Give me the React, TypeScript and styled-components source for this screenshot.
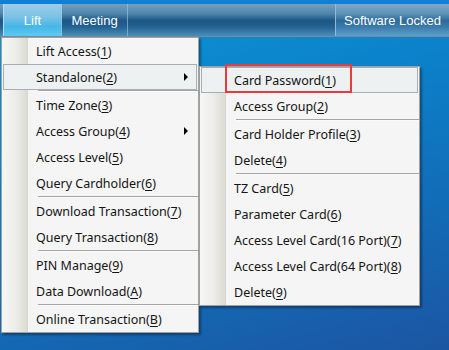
import React from "react";
import styled, { createGlobalStyle } from "styled-components";

const GlobalStyle = createGlobalStyle`
  html, body { margin: 0; padding: 0; overflow: hidden; }
  * { box-sizing: border-box; }
`;

const Screen = styled.div`
  width: 449px;
  height: 350px;
  display: flex;
  flex-direction: column;
  background: linear-gradient(165deg, #0e96d7 0%, #0b82cb 35%, #1467b2 75%, #1c55a2 100%);
  font-family: "Noto Sans", "Segoe UI", sans-serif;
`;

const TopStripe = styled.div`
  height: 4px;
  background: #0f80d6;
`;

const TabBar = styled.div`
  height: 33px;
  display: flex;
  background: linear-gradient(180deg, #74a0bf 0%, #4f86ae 30%, #1b5787 52%, #21608f 70%, #4a8dbb 100%);
  border-bottom: 1px solid #7d8a94;
  padding-left: 3px;
`;

const Tab = styled.div<{ $active?: boolean }>`
  width: ${(p) => (p.$active ? 59 : 66)}px;
  display: flex;
  align-items: center;
  justify-content: center;
  color: #fff;
  font-family: "Liberation Sans", Arial, sans-serif;
  font-size: 13px;
  border-right: 1px solid rgba(160, 200, 225, 0.6);
  background: ${(p) =>
    p.$active
      ? "linear-gradient(180deg, #9dcde8 0%, #7cc2e6 40%, #45b6e8 70%, #5ccaf2 100%)"
      : "transparent"};
  ${(p) => (p.$active ? "border-left: 1px solid #b8dcef;" : "")}
`;

const Spacer = styled.div`
  flex: 1;
`;

const LockTab = styled.div`
  width: 114px;
  display: flex;
  align-items: center;
  justify-content: center;
  color: #fff;
  font-family: "Liberation Sans", Arial, sans-serif;
  font-size: 13px;
  border-left: 1px solid #95b9d0;
  background: linear-gradient(180deg, #80a9c6 0%, #5e92b8 30%, #2c6a9a 52%, #3a7aa9 70%, #5d9ecb 100%);
`;

const Body = styled.div`
  flex: 1;
  padding-left: 1px;
`;

const MenuWrap = styled.div`
  position: relative;
  width: 198px;
`;

const Menu = styled.div<{ $width: number }>`
  width: ${(p) => p.$width}px;
  border: 1px solid #a0a0a0;
  background: linear-gradient(90deg, #f6f6f4 0px, #ecece8 14px, #dcdcd4 25px, #d2d2ca 26px, #f5f5f5 26px);
  box-shadow: 2px 2px 2px rgba(0, 0, 0, 0.35);
  display: flex;
  flex-direction: column;
  position: relative;
`;

const SubMenuPos = styled.div`
  position: absolute;
  left: 198px;
  top: 29px;
`;

const Item = styled.div<{ $hover?: boolean }>`
  height: 26px;
  margin: 0 1px;
  display: flex;
  align-items: center;
  padding-left: 32px;
  padding-right: 5px;
  font-size: 12.5px;
  color: #141414;
  border: 1px solid ${(p) => (p.$hover ? "#a7afb5" : "transparent")};
  background: ${(p) => (p.$hover ? "#edf1f1" : "transparent")};
  white-space: nowrap;
`;

const Label = styled.span`
  flex: 1;
`;

const Key = styled.span`
  text-decoration: underline;
  text-underline-offset: 2px;
`;

const Arrow = styled.span`
  width: 0;
  height: 0;
  border-left: 4px solid #000;
  border-top: 4px solid transparent;
  border-bottom: 4px solid transparent;
  margin-right: 3px;
`;

const Sep = styled.div`
  height: 2px;
  margin-left: 36px;
  border-top: 1px solid #a4a4a4;
  background: #fafafa;
`;

const Highlight = styled.div`
  position: absolute;
  left: 25px;
  top: -3px;
  width: 127px;
  height: 29px;
  border: 2px solid #ea3a3c;
  pointer-events: none;
`;

type Entry = { label: string; key: string; sub?: boolean; hover?: boolean } | "sep";

const mainItems: Entry[] = [
  { label: "Lift Access", key: "1" },
  { label: "Standalone", key: "2", sub: true, hover: true },
  "sep",
  { label: "Time Zone", key: "3" },
  { label: "Access Group", key: "4", sub: true },
  { label: "Access Level", key: "5" },
  { label: "Query Cardholder", key: "6" },
  "sep",
  { label: "Download Transaction", key: "7" },
  { label: "Query Transaction", key: "8" },
  "sep",
  { label: "PIN Manage", key: "9" },
  { label: "Data Download", key: "A" },
  "sep",
  { label: "Online Transaction", key: "B" },
];

const subItems: Entry[] = [
  { label: "Card Password", key: "1", hover: true },
  { label: "Access Group", key: "2" },
  "sep",
  { label: "Card Holder Profile", key: "3" },
  { label: "Delete", key: "4" },
  "sep",
  { label: "TZ Card", key: "5" },
  { label: "Parameter Card", key: "6" },
  { label: "Access Level Card(16 Port)", key: "7" },
  { label: "Access Level Card(64 Port)", key: "8" },
  { label: "Delete", key: "9" },
];

function renderEntries(entries: Entry[]) {
  return entries.map((e, i) =>
    e === "sep" ? (
      <Sep key={i} />
    ) : (
      <Item key={i} $hover={e.hover}>
        <Label>
          {e.label}(<Key>{e.key}</Key>)
        </Label>
        {e.sub && <Arrow />}
      </Item>
    )
  );
}

export default function App() {
  return (
    <>
      <GlobalStyle />
      <Screen>
        <TopStripe />
        <TabBar>
          <Tab $active>Lift</Tab>
          <Tab>Meeting</Tab>
          <Spacer />
          <LockTab>Software Locked</LockTab>
        </TabBar>
        <Body>
          <MenuWrap>
            <Menu $width={198}>{renderEntries(mainItems)}</Menu>
            <SubMenuPos>
              <Menu $width={221}>
                {renderEntries(subItems)}
                <Highlight />
              </Menu>
            </SubMenuPos>
          </MenuWrap>
        </Body>
      </Screen>
    </>
  );
}
